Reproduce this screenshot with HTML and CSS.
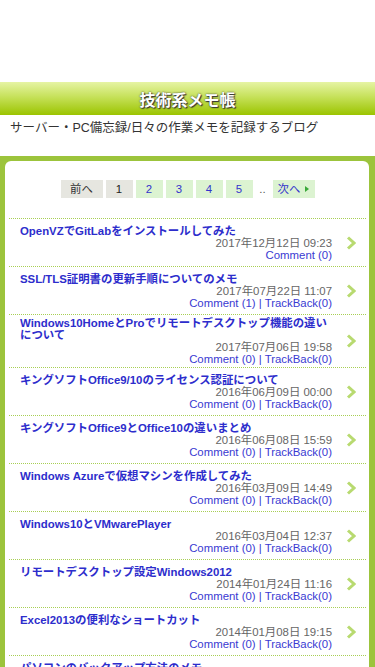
FILE: index.html
```html
<!DOCTYPE html>
<html lang="ja">
<head>
    <meta charset="UTF-8" />
    <meta name="viewport" content="width=device-width, initial-scale=1.0" />
    <title>技術系メモ帳</title>
    <link rel="stylesheet" href="styles.css">
</head>
<body>

<div class="ad-space"></div>

<header class="site-header">
    <h1 class="site-title">技術系メモ帳</h1>
</header>
<p class="site-desc">サーバー・PC備忘録/日々の作業メモを記録するブログ</p>

<div class="frame">
    <div class="panel">

        <div class="pager">
            <span class="page page-off">前へ</span>
            <span class="page page-now">1</span>
            <a class="page" href="#">2</a>
            <a class="page" href="#">3</a>
            <a class="page" href="#">4</a>
            <a class="page" href="#">5</a>
            <span class="page-dots">..</span>
            <a class="page page-next" href="#">次へ <svg width="4" height="6" viewBox="0 0 4 6"><polygon points="0,0 4,3 0,6" fill="#3aa83a"/></svg></a>
        </div>

        <ul class="entries">
            <li class="entry">
                <div class="entry-body">
                    <a class="entry-title" href="#">OpenVZでGitLabをインストールしてみた</a>
                    <div class="entry-date">2017年12月12日 09:23</div>
                    <div class="entry-meta"><a href="#">Comment (0)</a></div>
                </div>
                <svg class="entry-arrow" width="10" height="14" viewBox="0 0 10 14"><polyline points="2,1.5 8,7 2,12.5" /></svg>
            </li>
            <li class="entry">
                <div class="entry-body">
                    <a class="entry-title" href="#">SSL/TLS証明書の更新手順についてのメモ</a>
                    <div class="entry-date">2017年07月22日 11:07</div>
                    <div class="entry-meta"><a href="#">Comment (1)</a> | <a href="#">TrackBack(0)</a></div>
                </div>
                <svg class="entry-arrow" width="10" height="14" viewBox="0 0 10 14"><polyline points="2,1.5 8,7 2,12.5" /></svg>
            </li>
            <li class="entry">
                <div class="entry-body">
                    <a class="entry-title" href="#">Windows10HomeとProでリモートデスクトップ機能の違いについて</a>
                    <div class="entry-date">2017年07月06日 19:58</div>
                    <div class="entry-meta"><a href="#">Comment (0)</a> | <a href="#">TrackBack(0)</a></div>
                </div>
                <svg class="entry-arrow" width="10" height="14" viewBox="0 0 10 14"><polyline points="2,1.5 8,7 2,12.5" /></svg>
            </li>
            <li class="entry">
                <div class="entry-body">
                    <a class="entry-title" href="#">キングソフトOffice9/10のライセンス認証について</a>
                    <div class="entry-date">2016年06月09日 00:00</div>
                    <div class="entry-meta"><a href="#">Comment (0)</a> | <a href="#">TrackBack(0)</a></div>
                </div>
                <svg class="entry-arrow" width="10" height="14" viewBox="0 0 10 14"><polyline points="2,1.5 8,7 2,12.5" /></svg>
            </li>
            <li class="entry">
                <div class="entry-body">
                    <a class="entry-title" href="#">キングソフトOffice9とOffice10の違いまとめ</a>
                    <div class="entry-date">2016年06月08日 15:59</div>
                    <div class="entry-meta"><a href="#">Comment (0)</a> | <a href="#">TrackBack(0)</a></div>
                </div>
                <svg class="entry-arrow" width="10" height="14" viewBox="0 0 10 14"><polyline points="2,1.5 8,7 2,12.5" /></svg>
            </li>
            <li class="entry">
                <div class="entry-body">
                    <a class="entry-title" href="#">Windows Azureで仮想マシンを作成してみた</a>
                    <div class="entry-date">2016年03月09日 14:49</div>
                    <div class="entry-meta"><a href="#">Comment (0)</a> | <a href="#">TrackBack(0)</a></div>
                </div>
                <svg class="entry-arrow" width="10" height="14" viewBox="0 0 10 14"><polyline points="2,1.5 8,7 2,12.5" /></svg>
            </li>
            <li class="entry">
                <div class="entry-body">
                    <a class="entry-title" href="#">Windows10とVMwarePlayer</a>
                    <div class="entry-date">2016年03月04日 12:37</div>
                    <div class="entry-meta"><a href="#">Comment (0)</a> | <a href="#">TrackBack(0)</a></div>
                </div>
                <svg class="entry-arrow" width="10" height="14" viewBox="0 0 10 14"><polyline points="2,1.5 8,7 2,12.5" /></svg>
            </li>
            <li class="entry">
                <div class="entry-body">
                    <a class="entry-title" href="#">リモートデスクトップ設定Windows2012</a>
                    <div class="entry-date">2014年01月24日 11:16</div>
                    <div class="entry-meta"><a href="#">Comment (0)</a> | <a href="#">TrackBack(0)</a></div>
                </div>
                <svg class="entry-arrow" width="10" height="14" viewBox="0 0 10 14"><polyline points="2,1.5 8,7 2,12.5" /></svg>
            </li>
            <li class="entry">
                <div class="entry-body">
                    <a class="entry-title" href="#">Excel2013の便利なショートカット</a>
                    <div class="entry-date">2014年01月08日 19:15</div>
                    <div class="entry-meta"><a href="#">Comment (0)</a> | <a href="#">TrackBack(0)</a></div>
                </div>
                <svg class="entry-arrow" width="10" height="14" viewBox="0 0 10 14"><polyline points="2,1.5 8,7 2,12.5" /></svg>
            </li>
            <li class="entry">
                <div class="entry-body">
                    <a class="entry-title" href="#">パソコンのバックアップ方法のメモ</a>
                    <div class="entry-date">2013年12月20日 10:02</div>
                    <div class="entry-meta"><a href="#">Comment (0)</a> | <a href="#">TrackBack(0)</a></div>
                </div>
                <svg class="entry-arrow" width="10" height="14" viewBox="0 0 10 14"><polyline points="2,1.5 8,7 2,12.5" /></svg>
            </li>
        </ul>

    </div>
</div>

</body>
</html>
```

FILE: styles.css
```css
body {
    margin: 0;
    background: #ffffff;
    font-family: "Liberation Sans", "Noto Sans CJK JP", sans-serif;
    color: #333;
}

a {
    text-decoration: none;
}

.ad-space {
    height: 82px;
}

.site-header {
    height: 33px;
    display: flex;
    align-items: center;
    justify-content: center;
    background: linear-gradient(to bottom, #e6f4a4, #c6e15a 45%, #9bc400);
}
.site-title {
    margin: 0;
    font-size: 16px;
    font-weight: bold;
    color: #ffffff;
    text-shadow: 0 0 2px #333, 1px 1px 1px #333;
}

.site-desc {
    margin: 0;
    padding: 6px 10px 21px;
    font-size: 12.5px;
    line-height: 14px;
    color: #333;
}

.frame {
    background-color: #9cc43c;
    padding: 5px 6px 0 5px;
}
.panel {
    background: #ffffff;
    border-radius: 6px 6px 0 0;
    padding: 19px 3px 0 4px;
    min-height: 520px;
}

/* pager */
.pager {
    display: flex;
    justify-content: center;
    align-items: center;
    gap: 3px;
    margin-bottom: 20px;
    font-size: 11.4px;
}
.page {
    min-width: 27px;
    height: 18px;
    line-height: 18px;
    text-align: center;
    background-color: #dcf3d1;
    color: #3333cc;
}
.page-off {
    width: 42px;
    background-color: #e6e6e0;
    color: #333;
}
.page-now {
    background-color: #e6e6e0;
    color: #222;
}
.page-next {
    width: 42px;
}
.page-next svg {
    margin-left: 2px;
    vertical-align: 1px;
}
.page-dots {
    width: 14px;
    text-align: center;
    color: #555;
}

/* entries */
.entries {
    list-style: none;
    margin: 0;
    padding: 0;
}
.entry {
    display: flex;
    align-items: center;
    min-height: 43px;
    padding: 2px 0;
    border-top: 1px dotted #a8cf55;
    font-size: 11.4px;
    line-height: 12px;
}
.entry-body {
    flex: 1;
    padding-left: 11px;
}
.entry-title {
    display: block;
    font-weight: bold;
    color: #2d2dcc;
}
.entry-date {
    text-align: right;
    color: #666;
}
.entry-meta {
    text-align: right;
    color: #3a3ad2;
}
.entry-meta a {
    color: #3a3ad2;
}
.entry-arrow {
    flex-shrink: 0;
    margin: 0 10px 0 14px;
}
.entry-arrow polyline {
    fill: none;
    stroke: #b8da70;
    stroke-width: 3;
}
```
